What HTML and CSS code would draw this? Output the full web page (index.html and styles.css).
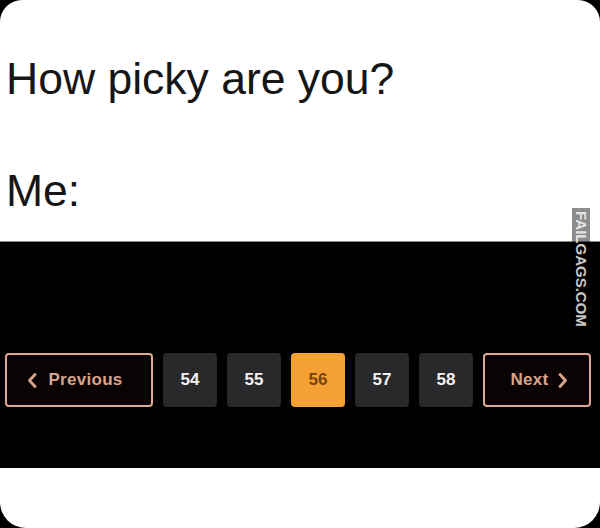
FILE: index.html
```html
<!DOCTYPE html>
<html lang="en">

<head>
    <meta charset="UTF-8">
    <meta name="viewport" content="width=device-width, initial-scale=1.0">
    <title>How picky are you?</title>
    <link rel="stylesheet" href="styles.css">
</head>

<body>

    <div class="card">
        <div class="caption">
            <h1>How picky are you?</h1>
            <p>Me:</p>
        </div>

        <div class="band">
            <nav class="pager">
                <a class="pager-btn" href="#">
                    <svg class="chev" width="10" height="15" viewBox="0 0 10 15">
                        <path d="M8 1.5 L2.5 7.5 L8 13.5" />
                    </svg>
                    Previous
                </a>
                <a class="page" href="#">54</a>
                <a class="page" href="#">55</a>
                <a class="page current" href="#">56</a>
                <a class="page" href="#">57</a>
                <a class="page" href="#">58</a>
                <a class="pager-btn next" href="#">
                    Next
                    <svg class="chev" width="10" height="15" viewBox="0 0 10 15">
                        <path d="M2 1.5 L7.5 7.5 L2 13.5" />
                    </svg>
                </a>
            </nav>
        </div>

        <!-- site watermark -->
        <div class="watermark">FAILGAGS.COM</div>
    </div>

</body>

</html>
```

FILE: styles.css
```css
html,
body {
    margin: 0;
    padding: 0;
    background-color: #000;
}

body {
    font-family: "Liberation Sans", Arial, sans-serif;
    width: 600px;
    height: 528px;
    overflow: hidden;
}

.card {
    position: relative;
    background-color: #fff;
    height: 528px;
    border-radius: 22px 22px 26px 26px;
    overflow: hidden;
}

.caption {
    padding: 54px 0 0 6px;
    height: 241px;
    box-sizing: border-box;
    color: #161616;
}

.caption h1,
.caption p {
    margin: 0;
    font-size: 44.5px;
    font-weight: normal;
    line-height: 50px;
}

.caption p {
    margin-top: 62px;
}

.band {
    background-color: #020102;
    border-top: 1px solid #8a8a8a;
    height: 227px;
    padding-top: 111px;
    box-sizing: border-box;
}

.pager {
    display: flex;
    gap: 10px;
    padding-left: 5px;
}

.pager a {
    display: flex;
    align-items: center;
    justify-content: center;
    height: 54px;
    text-decoration: none;
    font-weight: bold;
    font-size: 17px;
    box-sizing: border-box;
    border-radius: 4px;
}

.pager-btn {
    width: 148px;
    gap: 11px;
    padding-right: 8px;
    color: #d8a48b;
    border: 2px solid #dfa78c;
    background-color: #0a0303;
    letter-spacing: 0.3px;
}

.pager-btn.next {
    width: 108px;
    gap: 9px;
    padding: 0 0 0 4px;
}

.chev path {
    fill: none;
    stroke: #d8a48b;
    stroke-width: 2.8;
    stroke-linecap: round;
    stroke-linejoin: round;
}

.page {
    width: 54px;
    color: #f2f2f2;
    background-color: #29282a;
}

.page.current {
    background-color: #f6a133;
    color: #7a4312;
}

.watermark {
    position: absolute;
    top: 208px;
    right: 10px;
    width: 18px;
    padding: 3px 0 6px;
    writing-mode: vertical-rl;
    font-size: 15px;
    font-weight: bold;
    line-height: 18px;
    text-align: center;
    color: rgba(255, 255, 255, 0.8);
    background-color: rgba(0, 0, 0, 0.45);
}
```
